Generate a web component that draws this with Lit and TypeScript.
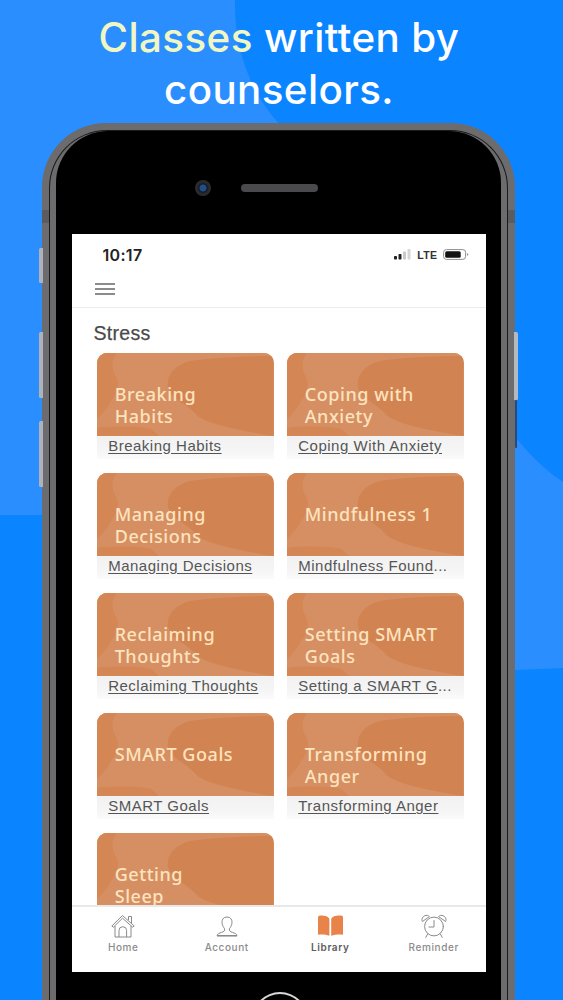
import { LitElement, html, css, svg } from "lit";
import { customElement } from "lit/decorators.js";

const COURSES: [string, string, string?][] = [
  ["Breaking\nHabits", "Breaking Habits"],
  ["Coping with\nAnxiety", "Coping With Anxiety"],
  ["Managing\nDecisions", "Managing Decisions"],
  ["Mindfulness 1", "Mindfulness Found", "..."],
  ["Reclaiming\nThoughts", "Reclaiming Thoughts"],
  ["Setting SMART\nGoals", "Setting a SMART G", "..."],
  ["SMART Goals", "SMART Goals"],
  ["Transforming\nAnger", "Transforming Anger"],
  ["Getting\nSleep", "Getting Sleep"],
];

const art = svg`
  <rect width="177" height="83" fill="#d58f63"/>
  <path d="M0 0H20C15 6 14 14 18 22C24 32 20 40 14 48C10 56 4 62 0 66Z" fill="#d48655"/>
  <path d="M93 8C120 4 150 3 177 3V83C155 80 140 76 126 73C112 69 104 66 100 62C90 50 74 46 71 33C70 22 78 12 93 8Z" fill="#d28352"/>
  <path d="M0 75C18 73 40 73 54 76C58 78 60 81 62 83H0Z" fill="#d48655"/>`;

@customElement("app-root")
export class AppRoot extends LitElement {
  static styles = css`
    :host { display: block; width: 563px; height: 1000px; overflow: hidden; position: relative; background: #0a84ff; font-family: Inter, "Liberation Sans", sans-serif; }
    .bg { position: absolute; left: 0; top: 0; width: 563px; height: 1000px; }
    .page { position: relative; display: flex; flex-direction: column; }
    h1 { margin: 0; padding: 12px 5px 0 0; text-align: center; color: #fff; font-size: 40.3px; line-height: 52px; font-weight: 500; letter-spacing: 0.4px; }
    h1 span { color: #f1f7c3; }
    .phone { position: relative; margin: 7px 0 0 42px; width: 473px; height: 1000px; padding: 7px; box-sizing: border-box; background: #6c6c6e; border-radius: 64px 64px 0 0; }
    .btn { position: absolute; width: 4px; background: #aeb2ba; border-radius: 1.5px 0 0 1.5px; }
    .b1 { left: -3px; top: 125px; height: 35px; }
    .b2 { left: -3px; top: 209px; height: 66px; }
    .b3 { left: -3px; top: 298px; height: 66px; }
    .b4 { right: -3px; top: 209px; height: 68px; background: #b4b8bf; border-radius: 0 1.5px 1.5px 0; }
    .b5 { right: -2px; top: 277px; height: 48px; width: 2px; background: #274a78; }
    .band { position: absolute; top: 87px; height: 13px; width: 7px; background: #5c5c5e; }
    .bl { left: 0; } .br { right: 0; }
    .mid { height: 100%; box-sizing: border-box; border: 1.5px solid #1a1a1a; border-bottom: 0; border-radius: 58px 58px 0 0; background: #6c6c6e; padding: 0 6px; }
    .bezel { height: 100%; box-sizing: border-box; background: #000; border-radius: 52px 52px 0 0; padding: 48px 15.5px 0 15.5px; display: flex; flex-direction: column; }
    .sensors { display: flex; align-items: center; height: 17px; padding-left: 123px; gap: 30px; }
    .cam { width: 16px; height: 16px; border-radius: 50%; background: radial-gradient(circle at 50% 50%, #1f4f8a 0 3px, #111a24 4px, #2b2b2e 6px); }
    .speaker { width: 77px; height: 8px; border-radius: 4px; background: #4a4a4c; }
    .screen { margin-top: 37.5px; height: 738px; background: #fff; display: flex; flex-direction: column; overflow: hidden; flex: none; }
    .status { height: 42px; flex: none; display: flex; align-items: center; justify-content: space-between; padding: 0 17px 0 31px; box-sizing: border-box; }
    .time { font-size: 16px; font-weight: 600; color: #222; letter-spacing: 0.3px; }
    .sig { display: flex; align-items: center; gap: 5px; }
    .sig b { font: 700 10.5px "Liberation Sans", sans-serif; color: #333; letter-spacing: 0.4px; }
    .nav { height: 32px; flex: none; box-sizing: border-box; border-bottom: 1px solid #ececec; padding: 3px 0 0 23px; display: flex; align-items: flex-start; }
    .nav svg { display: block; margin-top: 4px; }
    .scroll { flex: 1; min-height: 0; overflow: hidden; padding-left: 22px; }
    .head { margin: 15px 0 10px; font: 400 19.5px/20px "Liberation Sans", sans-serif; color: #4a4a4a; letter-spacing: 0.3px; -webkit-text-stroke: 0.25px #4a4a4a; }
    .grid { display: grid; grid-template-columns: 176.4px 176.4px; column-gap: 13.7px; row-gap: 14.2px; margin-left: 3.7px; }
    .card { height: 106px; display: flex; flex-direction: column; }
    .img { position: relative; height: 83px; flex: none; border-radius: 10px 10px 0 0; overflow: hidden; background: #d58f63; }
    .img svg { position: absolute; left: 0; top: 0; width: 100%; height: 100%; }
    .title { position: relative; margin: 0; padding: 30px 10px 0 17.5px; font: 500 18px/22px "Noto Sans", sans-serif; color: #fde3be; letter-spacing: 0.55px; white-space: pre-line; }
    .label { flex: 1; display: block; padding: 2px 0 0 11px; background: linear-gradient(#f1f1f1, #f6f6f6 70%, #fbfbfb); font: 400 15px/15px "Liberation Sans", sans-serif; color: #555; letter-spacing: 0.5px; white-space: nowrap; }
    .label u { text-underline-offset: 1.5px; }
    .tabs { height: 67px; flex: none; box-sizing: border-box; border-top: 2px solid #e9e9eb; background: #fff; display: grid; grid-template-columns: repeat(4, 1fr); }
    .tab { display: flex; flex-direction: column; align-items: center; padding-top: 7px; font-size: 10px; line-height: 12px; font-weight: 500; letter-spacing: 0.6px; color: #8b8b8b; }
    .tab svg { display: block; height: 24px; margin-bottom: 3px; }
    .tab.on { color: #5d5d5d; font-weight: 600; }
    .homebtn { width: 56px; height: 56px; margin: 20px 0 0 180px; flex: none; box-sizing: border-box; border-radius: 50%; border: 2.5px solid #555; border-top-color: #d9d9d9; }
  `;

  render() {
    return html`
      <svg class="bg" viewBox="0 0 563 1000" aria-hidden="true">
        <path d="M0 0H235C234 45 248 90 280 125V515H0Z" fill="#2a8eff"/>
        <path d="M515 437C530 455 545 470 563 482V668L515 670Z" fill="#2a8eff"/>
      </svg>
      <div class="page">
        <h1><span>Classes</span> written by<br />counselors.</h1>
        <div class="phone">
          <i class="btn b1"></i><i class="btn b2"></i><i class="btn b3"></i><i class="btn b4"></i><i class="btn b5"></i>
          <i class="band bl"></i><i class="band br"></i>
          <div class="mid">
            <div class="bezel">
              <div class="sensors"><div class="cam"></div><div class="speaker"></div></div>
              <div class="screen">
                <div class="status">
                  <span class="time">10:17</span>
                  <span class="sig">
                    <svg width="19" height="11" viewBox="0 0 17 11">
                      <rect x="0" y="7" width="3" height="3.5" rx=".8" fill="#222"/>
                      <rect x="4.5" y="5" width="3" height="5.5" rx=".8" fill="#222"/>
                      <rect x="9" y="2.5" width="3" height="8" rx=".8" fill="#c9c9c9"/>
                      <rect x="13.5" y="0" width="3" height="10.5" rx=".8" fill="#d6d6d6"/>
                    </svg>
                    <b>LTE</b>
                    <svg width="26" height="11" viewBox="0 0 26 11">
                      <rect x=".6" y=".6" width="22" height="9.8" rx="2.8" fill="none" stroke="#8e8e8e" stroke-width="1"/>
                      <rect x="2.2" y="2.2" width="15.5" height="6.6" rx="1.5" fill="#111"/>
                      <path d="M24 4v3l1.5-1.5z" fill="#8e8e8e"/>
                    </svg>
                  </span>
                </div>
                <div class="nav">
                  <svg width="20" height="12" viewBox="0 0 20 12"><path d="M0 1H20M0 6H20M0 11H20" stroke="#666" stroke-width="1.4" fill="none"/></svg>
                </div>
                <div class="scroll">
                  <div class="head">Stress</div>
                  <div class="grid">
                    ${COURSES.map(([t, l, more]) => html`
                      <div class="card">
                        <div class="img">
                          <svg viewBox="0 0 177 83" preserveAspectRatio="none" aria-hidden="true">${art}</svg>
                          <p class="title">${t}</p>
                        </div>
                        <span class="label"><u>${l}</u>${more ?? ""}</span>
                      </div>`)}
                  </div>
                </div>
                <div class="tabs">
                  <div class="tab">
                    <svg width="24" height="24" viewBox="0 0 24 24" fill="none" stroke="#8a8a8a" stroke-width="1" stroke-linejoin="round">
                      <path d="M.8 12L11.5 1.5L23.2 12L21.6 13.2L11.5 4.2L2.4 13.2Z"/>
                      <path d="M17.5 6V2.5H20.5V9"/>
                      <path d="M4 12V23H20V12"/>
                      <path d="M8 23V16.5A3.8 3.8 0 0 1 15.6 16.5V23"/>
                    </svg>Home
                  </div>
                  <div class="tab">
                    <svg width="24" height="24" viewBox="0 0 24 24" fill="none" stroke="#8a8a8a" stroke-width="1" stroke-linejoin="round">
                      <path d="M12 3C8.5 3 6.8 5.5 7 8.6C7.2 11.5 8.6 13.4 9.6 14.8C10 16.8 9 17.6 6.5 18.4C4.4 19.1 2.6 19.8 2 21.5H22C21.4 19.8 19.6 19.1 17.5 18.4C15 17.6 14 16.8 14.4 14.8C15.4 13.4 16.8 11.5 17 8.6C17.2 5.5 15.5 3 12 3Z"/>
                      <path d="M2 22.5H22" stroke="#bdbdbd"/>
                    </svg>Account
                  </div>
                  <div class="tab on">
                    <svg width="27" height="24" viewBox="0 0 27 24">
                      <path d="M12.4 4.8C11 2.6 8.4 1.5 5 1.5H3C1.8 1.5 1 2.4 1 3.6V20.8C3 20.4 8.6 20.2 12.4 21.8Z" fill="#e8834a"/>
                      <path d="M14.2 4.8C15.6 2.6 18.2 1.5 21.6 1.5H24C25.2 1.5 26 2.4 26 3.6V20.8C24 20.4 18 20.2 14.2 21.8Z" fill="#e8834a"/>
                    </svg>Library
                  </div>
                  <div class="tab">
                    <svg width="28" height="24" viewBox="0 0 28 24" fill="none" stroke="#8a8a8a" stroke-width="1" stroke-linecap="round">
                      <circle cx="14" cy="12.5" r="9.4"/>
                      <path d="M14 6.5V13H9"/>
                      <path d="M2.2 7.2C1 4.5 3.4 1 7.5 1.4C8.2 1.5 8.8 1.8 9.2 2.3Z"/>
                      <path d="M25.8 7.2C27 4.5 24.6 1 20.5 1.4C19.8 1.5 19.2 1.8 18.8 2.3Z"/>
                      <path d="M7.6 20L5.8 23.4M20.4 20L22.2 23.4"/>
                    </svg>Reminder
                  </div>
                </div>
              </div>
              <div class="homebtn"></div>
            </div>
          </div>
        </div>
      </div>
    `;
  }
}
